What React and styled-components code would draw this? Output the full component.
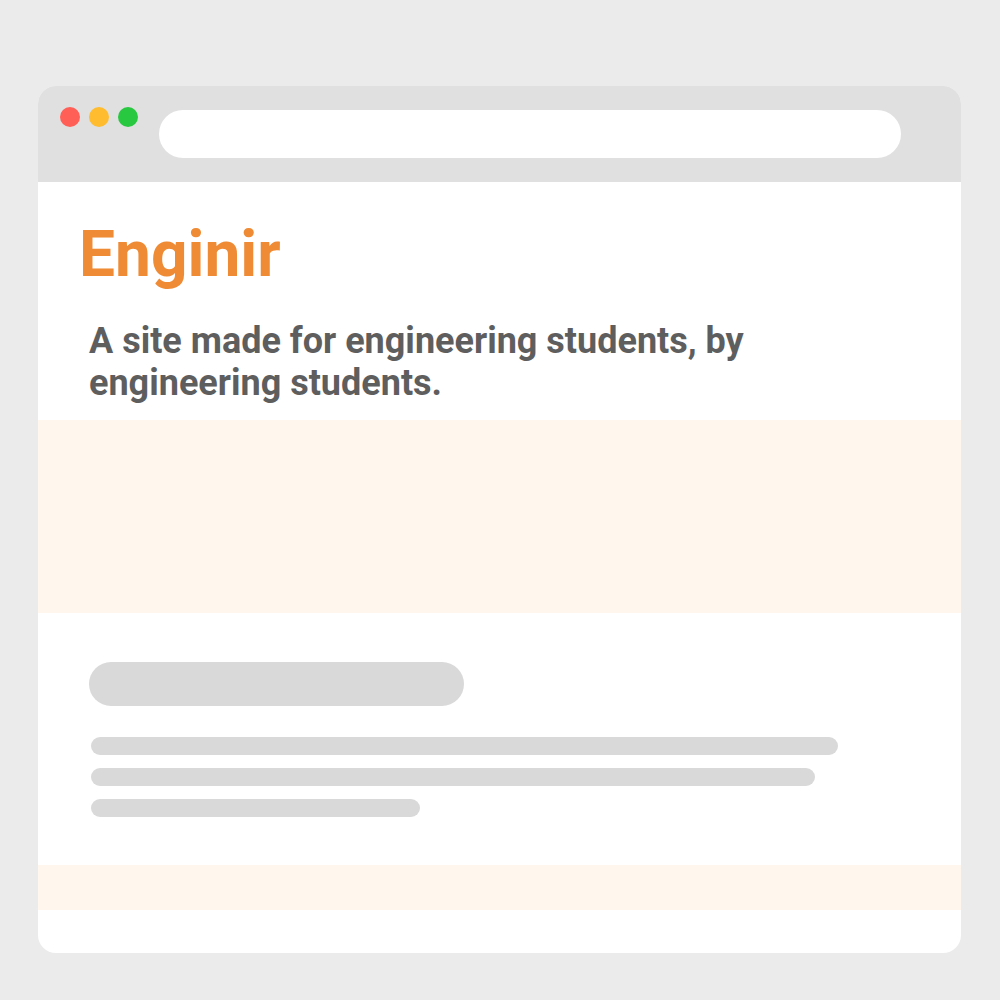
import React from "react";
import styled, { createGlobalStyle } from "styled-components";

const GlobalStyle = createGlobalStyle`
    html, body {
        margin: 0;
        padding: 0;
        background: #ebebeb;
        font-family: Roboto, "Liberation Sans", Arial, sans-serif;
    }
`;

const Page = styled.div`
    padding: 86px 39px 47px 38px;
`;

const BrowserWindow = styled.div`
    width: 923px;
    height: 867px;
    background: #ffffff;
    border-radius: 18px;
    overflow: hidden;
    display: flex;
    flex-direction: column;
`;

const TitleBar = styled.div`
    height: 96px;
    background: #e0e0e0;
    display: flex;
    align-items: flex-start;
    padding: 21px 60px 0 22px;
    box-sizing: border-box;
    gap: 21px;
`;

const Dots = styled.div`
    display: flex;
    gap: 9px;
`;

const Dot = styled.span`
    width: 20px;
    height: 20px;
    border-radius: 50%;
    background: ${(p) => p.color};
`;

const AddressBar = styled.div`
    flex: 1;
    height: 48px;
    margin-top: 3px;
    background: #ffffff;
    border-radius: 24px;
`;

const Hero = styled.header`
    padding: 35px 0 16px 0;
`;

const Title = styled.h1`
    margin: 0 0 27px 41px;
    font-size: 64px;
    line-height: 76px;
    font-weight: 700;
    color: #ef8b35;
`;

const Tagline = styled.p`
    margin: 0 0 0 51px;
    width: 720px;
    font-size: 36px;
    line-height: 42px;
    font-weight: 700;
    color: #5e5e5e;
`;

const Band = styled.div`
    height: ${(p) => p.h}px;
    background: #fff6ed;
    flex-shrink: 0;
`;

const Section = styled.section`
    padding: 49px 0 48px 51px;
    display: flex;
    flex-direction: column;
`;

const HeadingBar = styled.div`
    width: 375px;
    height: 44px;
    border-radius: 22px;
    background: #d9d9d9;
    margin-bottom: 31px;
`;

const Lines = styled.div`
    display: flex;
    flex-direction: column;
    gap: 13px;
    padding-left: 2px;
`;

const Line = styled.div`
    width: ${(p) => p.w}px;
    height: 18px;
    border-radius: 9px;
    background: #d9d9d9;
`;

function App() {
    return (
        <>
            <GlobalStyle />
            <Page>
                <BrowserWindow>
                    <TitleBar>
                        <Dots>
                            <Dot color="#ff5f57" />
                            <Dot color="#febc2e" />
                            <Dot color="#28c840" />
                        </Dots>
                        <AddressBar />
                    </TitleBar>
                    <Hero>
                        <Title>Enginir</Title>
                        <Tagline>A site made for engineering students, by engineering students.</Tagline>
                    </Hero>
                    <Band h={193} />
                    <Section>
                        <HeadingBar />
                        <Lines>
                            <Line w={747} />
                            <Line w={724} />
                            <Line w={329} />
                        </Lines>
                    </Section>
                    <Band h={45} />
                </BrowserWindow>
            </Page>
        </>
    );
}

export default App;
